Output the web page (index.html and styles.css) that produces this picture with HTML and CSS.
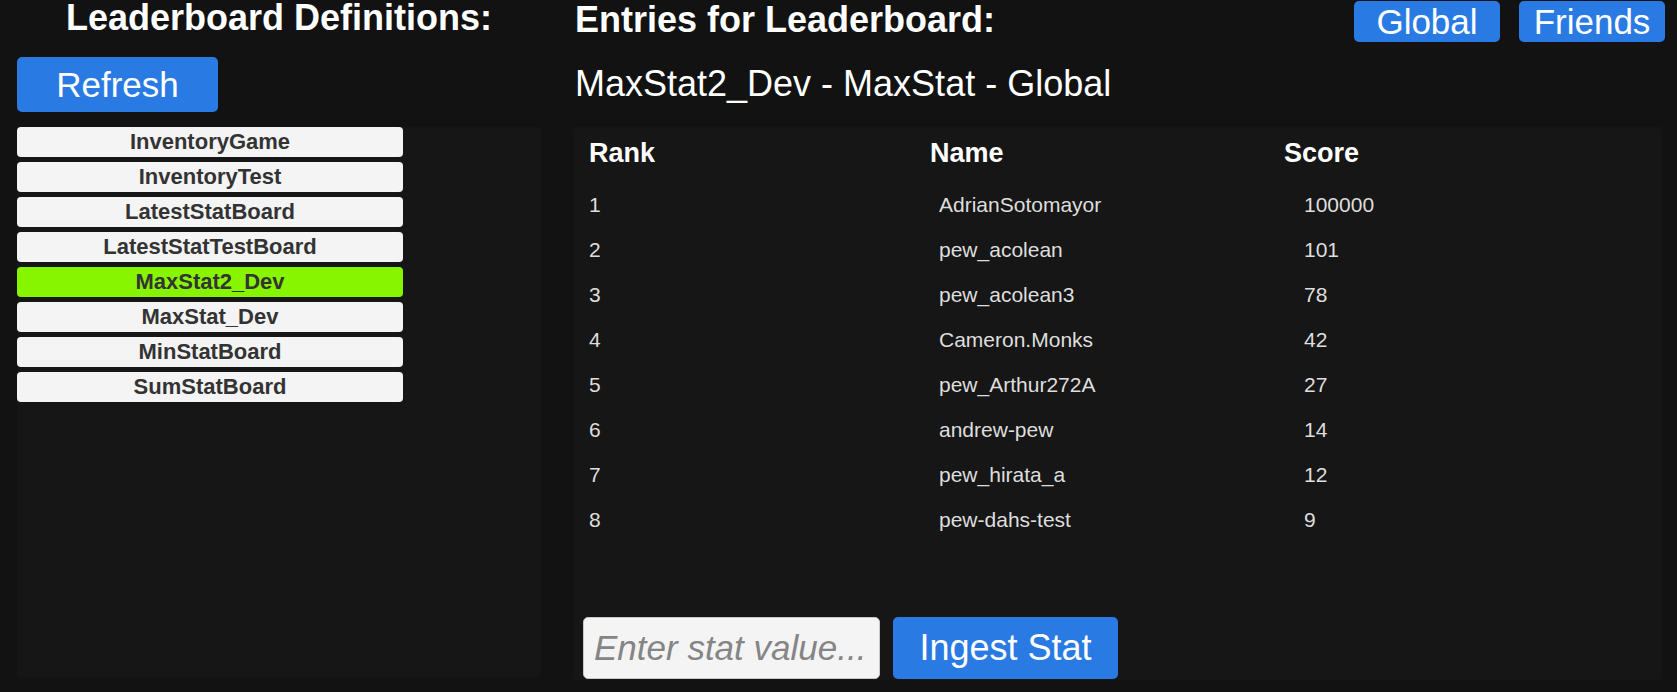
FILE: index.html
```html
<!DOCTYPE html>
<html lang="en">
<head>
<meta charset="utf-8">
<title>Leaderboards</title>
<link rel="stylesheet" href="styles.css">
</head>
<body>
<div class="app">
  <section class="defs">
    <h1 class="defs-title">Leaderboard Definitions:</h1>
    <button class="btn btn-refresh">Refresh</button>
    <div class="panel defs-panel">
      <ul class="def-list">
        <li class="def-item">InventoryGame</li>
        <li class="def-item">InventoryTest</li>
        <li class="def-item">LatestStatBoard</li>
        <li class="def-item">LatestStatTestBoard</li>
        <li class="def-item selected">MaxStat2_Dev</li>
        <li class="def-item">MaxStat_Dev</li>
        <li class="def-item">MinStatBoard</li>
        <li class="def-item">SumStatBoard</li>
      </ul>
    </div>
  </section>
  <section class="entries">
    <div class="entries-head">
      <h1 class="entries-title">Entries for Leaderboard:</h1>
      <div class="scope">
        <button class="btn btn-scope">Global</button>
        <button class="btn btn-scope">Friends</button>
      </div>
    </div>
    <div class="subtitle">MaxStat2_Dev - MaxStat - Global</div>
    <div class="panel table-panel">
      <div class="table">
        <div class="thead">
          <span>Rank</span><span>Name</span><span>Score</span>
        </div>
        <div class="row"><span>1</span><span>AdrianSotomayor</span><span>100000</span></div>
        <div class="row"><span>2</span><span>pew_acolean</span><span>101</span></div>
        <div class="row"><span>3</span><span>pew_acolean3</span><span>78</span></div>
        <div class="row"><span>4</span><span>Cameron.Monks</span><span>42</span></div>
        <div class="row"><span>5</span><span>pew_Arthur272A</span><span>27</span></div>
        <div class="row"><span>6</span><span>andrew-pew</span><span>14</span></div>
        <div class="row"><span>7</span><span>pew_hirata_a</span><span>12</span></div>
        <div class="row"><span>8</span><span>pew-dahs-test</span><span>9</span></div>
      </div>
      <div class="ingest">
        <input class="stat-input" type="text" placeholder="Enter stat value...">
        <button class="btn btn-ingest">Ingest Stat</button>
      </div>
    </div>
  </section>
</div>
</body>
</html>
```

FILE: styles.css
```css
* { box-sizing: border-box; }

html, body {
  margin: 0;
  padding: 0;
  background: #121212;
  height: 692px;
  overflow: hidden;
}

body {
  font-family: "Liberation Sans", Arial, sans-serif;
  color: #ffffff;
}

.app {
  display: flex;
  height: 692px;
  padding-left: 17px;
}

.btn {
  font-family: "Liberation Sans", Arial, sans-serif;
  background: #2a7ae3;
  color: #ffffff;
  border: none;
  border-radius: 5px;
  padding: 0;
  display: flex;
  align-items: center;
  justify-content: center;
  cursor: pointer;
}

/* ---------- left column ---------- */
.defs {
  width: 524px;
  display: flex;
  flex-direction: column;
  padding-bottom: 15px;
}

.defs-title {
  margin: 0;
  font-size: 36px;
  font-weight: bold;
  line-height: 36px;
  height: 36px;
  text-align: center;
}

.btn-refresh {
  margin-top: 21px;
  width: 201px;
  height: 55px;
  font-size: 35px;
}

.panel {
  background: #161616;
  border-radius: 3px;
}

.defs-panel {
  margin-top: 15px;
  flex: 1;
}

.def-list {
  list-style: none;
  margin: 0;
  padding: 0;
  width: 386px;
  display: flex;
  flex-direction: column;
  gap: 5px;
}

.def-item {
  height: 30px;
  background: #f4f4f4;
  border-radius: 4px;
  color: #333333;
  font-size: 22px;
  font-weight: bold;
  line-height: 30px;
  text-align: center;
}

.def-item.selected {
  background: #88f500;
}

/* ---------- right column ---------- */
.entries {
  margin-left: 33px;
  width: 1091px;
  display: flex;
  flex-direction: column;
  padding-bottom: 12px;
}

.entries-head {
  display: flex;
  justify-content: space-between;
  align-items: flex-start;
  height: 42px;
}

.entries-title {
  margin: 0;
  font-size: 36px;
  font-weight: bold;
  line-height: 40px;
  padding-left: 1px;
}

.scope {
  display: flex;
  gap: 19px;
  margin-top: 1px;
}

.btn-scope {
  width: 146px;
  height: 41px;
  font-size: 35px;
}

.subtitle {
  margin-top: 22px;
  font-size: 36px;
  line-height: 40px;
  padding-left: 1px;
}

.table-panel {
  margin-top: 23px;
  width: 1088px;
  flex: 1;
  display: flex;
  flex-direction: column;
  padding: 11px 0 1px 0;
}

.table {
  flex: 1;
  padding-left: 15px;
}

.thead {
  display: grid;
  grid-template-columns: 341px 354px 1fr;
  font-size: 27px;
  font-weight: bold;
  line-height: 30px;
  margin-bottom: 14px;
}

.row {
  display: grid;
  grid-template-columns: 350px 365px 1fr;
  font-size: 21px;
  line-height: 45px;
  color: #dedede;
}

.ingest {
  display: flex;
  gap: 13px;
  padding-left: 9px;
}

.stat-input {
  width: 297px;
  height: 62px;
  background: #f4f4f4;
  border: 1px solid #c8c8c8;
  border-radius: 5px;
  padding: 0 10px;
  font-family: "Liberation Sans", Arial, sans-serif;
  font-size: 35px;
  color: #333333;
  outline: none;
}

.stat-input::placeholder {
  color: #858585;
  font-style: italic;
}

.btn-ingest {
  width: 225px;
  height: 62px;
  font-size: 36px;
}
```
